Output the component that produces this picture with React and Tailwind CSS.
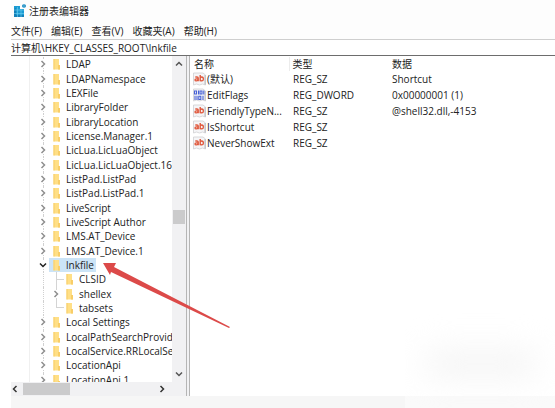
import React, { useState } from "react";

const menus = ["文件(F)", "编辑(E)", "查看(V)", "收藏夹(A)", "帮助(H)"];

const treeKeys = [
  { name: "LDAP" },
  { name: "LDAPNamespace" },
  { name: "LEXFile" },
  { name: "LibraryFolder" },
  { name: "LibraryLocation" },
  { name: "License.Manager.1" },
  { name: "LicLua.LicLuaObject" },
  { name: "LicLua.LicLuaObject.16" },
  { name: "ListPad.ListPad" },
  { name: "ListPad.ListPad.1" },
  { name: "LiveScript" },
  { name: "LiveScript Author" },
  { name: "LMS.AT_Device" },
  { name: "LMS.AT_Device.1" },
  { name: "lnkfile", open: true },
  { name: "CLSID", child: true, leaf: true },
  { name: "shellex", child: true },
  { name: "tabsets", child: true, leaf: true, last: true },
  { name: "Local Settings" },
  { name: "LocalPathSearchProvid" },
  { name: "LocalService.RRLocalSe" },
  { name: "LocationApi" },
  { name: "LocationApi.1" },
];

const values = [
  { name: "(默认)", type: "REG_SZ", data: "Shortcut" },
  { name: "EditFlags", type: "REG_DWORD", data: "0x00000001 (1)" },
  { name: "FriendlyTypeN...", type: "REG_SZ", data: "@shell32.dll,-4153" },
  { name: "IsShortcut", type: "REG_SZ", data: "" },
  { name: "NeverShowExt", type: "REG_SZ", data: "" },
];

const AppIcon = () => (
  <svg width="14" height="14" viewBox="0 0 14 14" className="shrink-0" aria-hidden="true">
    <path d="M1 2 L7 2 V5 H11 V13 H1Z" fill="#1a9bd3" />
    <path d="M1 5 L3 4 V13 H1Z M3 11 H11 V13 H3Z" fill="#1480b8" />
    <path d="M4.5 3 V13 M8 5 V13 M1 6 H11 M1 9.5 H11" stroke="#6fd0f0" strokeWidth="0.6" />
    <path d="M9 1 L11 0 L13 1 V3 L11 4 L9 3Z" fill="#3f9fcd" />
  </svg>
);

const FolderIcon = () => (
  <svg width="8" height="12" viewBox="0 0 8 12" className="shrink-0" aria-hidden="true">
    <path d="M0.5 1 H6 V7 H7 V11.5 H0.5Z" fill="#ffdf86" />
    <path d="M0.5 1 H1.5 V11.5 H0.5Z M5 7 H7 V11.5 H5Z" fill="#f8cd68" />
  </svg>
);

const Chevron = ({ className }) => (
  <svg width="8" height="8" viewBox="0 0 8 8" fill="none" className={className} aria-hidden="true">
    <path d="M2.5 1 L5.5 4 L2.5 7" stroke="currentColor" strokeWidth="1.5" />
  </svg>
);

const ValueIcon = ({ binary }) => (
  <svg width="13" height="14" viewBox="0 0 13 14" className="shrink-0" aria-hidden="true">
    <path d="M0.5 1 H10 L12.5 3 V13 L9.5 12 L6.5 13 L3.5 12 L0.5 13Z" fill="#f5f5f7" stroke="#cfcfd2" strokeWidth="0.8" />
    <path d="M12 3 V12.5" stroke="#b4b4b8" strokeWidth="0.9" />
    {binary ? (
      <path
        d="M1.5 3 H3.5 V6 H1.5Z M5.5 2.5 V6.5 M7 3 H9 V6 H7Z M10.8 2.5 V6.5 M2 7.8 V12 M4 7.8 V12 M5.8 8.3 H7.8 V11.5 H5.8Z M10 7.8 V12"
        fill="none"
        stroke="#4660d6"
        strokeWidth="1.1"
      />
    ) : (
      <path
        d="M2.3 5 H4 Q5.2 5 5.2 6.1 V9.2 M5.2 6.9 H3.4 Q2 7 2 8 Q2.1 9 3.4 8.9 Q4.8 8.8 5.2 7.5 M7.2 3 V9.2 M7.2 6 Q7.8 4.9 9 5 Q10.4 5.2 10.4 7 Q10.3 8.9 8.8 8.9 Q7.8 8.9 7.2 8"
        fill="none"
        stroke="#e0583c"
        strokeWidth="1.4"
      />
    )}
  </svg>
);

const TreeRow = ({ item, selected, onSelect }) => (
  <li className={item.child ? "flex items-center pl-[41px] relative" : "flex items-center pl-7 relative"}>
    {/* Guide lines */}
    <span className="absolute left-8 top-0 h-full border-l border-dotted border-[#d0d0d0]" />
    {item.child && (
      <span
        className={
          item.last
            ? "absolute left-[45px] top-0 h-1/2 w-2 border-l border-b border-[#d4d4d4]"
            : "absolute left-[45px] top-0 h-full border-l border-[#d4d4d4]"
        }
      />
    )}
    {item.leaf ? (
      <span className="w-2 shrink-0">
        {!item.last && <span className="block ml-1 w-2 border-t border-[#d4d4d4]" />}
      </span>
    ) : (
      <button type="button" aria-label={`Expand ${item.name}`} className="relative w-2 shrink-0 bg-white">
        <Chevron className={item.open ? "rotate-90 text-[#222]" : "text-[#8f8f8f]"} />
      </button>
    )}
    <button
      type="button"
      onClick={onSelect}
      className={
        selected
          ? "flex h-full items-center gap-1 ml-[2px] pl-1 pr-[2px] whitespace-nowrap bg-[#cce4f7]"
          : "flex h-full items-center gap-1 ml-[2px] pl-1 pr-[2px] whitespace-nowrap"
      }
    >
      <FolderIcon />
      <span className="pl-px">{item.name}</span>
    </button>
  </li>
);

const App = () => {
  const [selected, setSelected] = useState("lnkfile");

  return (
    <div className="flex min-h-screen flex-col overflow-hidden bg-white pl-[11px] font-['Open_Sans','Noto_Sans_CJK_SC',sans-serif] text-[10px] leading-[14px] text-[#222]">
      <header className="flex h-[22px] items-center gap-[2px] bg-[#fdfdfd] pl-[2px]">
        <AppIcon />
        <h1>注册表编辑器</h1>
      </header>

      <nav className="flex h-[17px] items-center gap-[9px] bg-[#fdfdfd]">
        {menus.map(menu => (
          <button key={menu} type="button" className="whitespace-nowrap">
            {menu}
          </button>
        ))}
      </nav>

      <input
        type="text"
        aria-label="Address"
        defaultValue="计算机\HKEY_CLASSES_ROOT\lnkfile"
        className="h-[17px] w-full border-t border-b border-t-[#cfcfcf] border-b-[#6d6d6d] outline-none"
      />

      <main className="relative flex">
        <section className="flex w-[175px] shrink-0 flex-col">
          <div className="flex h-[326px]">
            <div className="ml-[18px] min-w-0 flex-1 overflow-hidden border-l border-[#f0f0f0]">
              <ul className="-ml-[19px] grid h-[331px] auto-rows-fr pt-px">
                {treeKeys.map(item => (
                  <TreeRow
                    key={item.name}
                    item={item}
                    selected={selected === item.name}
                    onSelect={() => setSelected(item.name)}
                  />
                ))}
              </ul>
            </div>
            {/* Vertical scrollbar */}
            <div className="flex w-[14px] shrink-0 flex-col items-center bg-[#f1f1f3] py-1">
              <button type="button" aria-label="Scroll up">
                <Chevron className="-rotate-90 text-[#555]" />
              </button>
              <div className="mt-[142px] h-[14px] w-3 bg-[#cbcbcc]" />
              <button type="button" aria-label="Scroll down" className="mt-auto">
                <Chevron className="rotate-90 text-[#555]" />
              </button>
            </div>
          </div>
          {/* Horizontal scrollbar */}
          <div className="flex h-[14px] items-center bg-[#f1f1f3]">
            <button type="button" aria-label="Scroll left" className="w-3">
              <Chevron className="rotate-180 text-[#333]" />
            </button>
            <div className="h-3 w-[47px] bg-[#cbcbcc]" />
            <button type="button" aria-label="Scroll right" className="ml-auto mr-5">
              <Chevron className="text-[#333]" />
            </button>
          </div>
        </section>

        <div className="w-1 shrink-0 border-x border-[#b5b5b5] bg-[#f1f1f3]" />

        <section className="min-w-0 flex-1 pt-px">
          <table className="h-[94px] w-full table-fixed text-left">
            <thead>
              <tr>
                <th className="w-[99px] p-0 pl-1 font-normal">名称</th>
                <th className="w-[99px] border-l border-[#ececec] p-0 pl-[3px] font-normal">类型</th>
                <th className="p-0 pl-1 font-normal">数据</th>
              </tr>
            </thead>
            <tbody>
              {values.map(value => (
                <tr key={value.name}>
                  <td className="p-0 pl-[3px]">
                    <div className="flex items-center gap-px">
                      <ValueIcon binary={value.type === "REG_DWORD"} />
                      <span className="whitespace-nowrap">{value.name}</span>
                    </div>
                  </td>
                  <td className="p-0 pl-1">{value.type}</td>
                  <td className="p-0 pl-1">{value.data}</td>
                </tr>
              ))}
            </tbody>
          </table>
        </section>

        {/* Red pointer to the selected key */}
        <svg
          width="130"
          height="72"
          viewBox="0 0 130 72"
          className="pointer-events-none absolute left-[91px] top-[206px]"
          aria-hidden="true"
        >
          <path d="M1 1 L14 1 L12 5 L128 65 L127 66 L9 10 L8 13Z" fill="#dc4a49" />
        </svg>
      </main>

      <footer className="relative min-h-3 flex-1 bg-[#f6f6f6]">
        <div className="absolute bottom-0 right-0 h-24 w-[150px] overflow-hidden">
          <div className="absolute bottom-0 h-3 w-full bg-[#fafafa]" />
          <div className="absolute left-5 top-10 h-6 w-28 rounded-full bg-[#f3f3f3] blur-lg" />
        </div>
      </footer>
    </div>
  );
};

export default App;
